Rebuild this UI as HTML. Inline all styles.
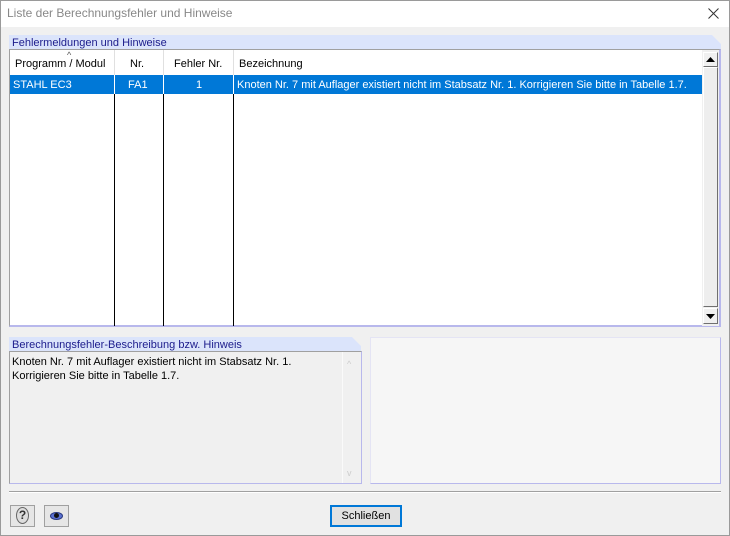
<!DOCTYPE html>
<html><head><style>
*{box-sizing:border-box;margin:0;padding:0}
body{width:730px;height:536px;background:#f0f0f0;font-family:"Liberation Sans",sans-serif;font-size:11px;position:relative;overflow:hidden;color:#000}
.a{position:absolute}
.hdr{background:#dbe4fb;color:#1c1c8c;font-size:11px;padding:2px 0 0 3px;height:15px}
.col{position:absolute;top:0;bottom:0;border-left:1px solid #000}
</style></head><body>
<div class="a" style="left:0;top:0;width:730px;height:536px;border:1px solid #9a9a9a"></div>
<div class="a" style="left:1px;top:1px;width:728px;height:26px;background:#fff"></div>
<div class="a" style="left:7px;top:6px;font-size:12px;color:#888">Liste der Berechnungsfehler und Hinweise</div>
<svg class="a" style="left:708px;top:8px" width="11" height="11"><path d="M0.5 0.5L10.5 10.5M10.5 0.5L0.5 10.5" stroke="#333" stroke-width="1"/></svg>

<div class="a hdr" style="left:9px;top:35px;width:712px;clip-path:polygon(0 0,703px 0,712px 9px,712px 15px,0 15px)">Fehlermeldungen und Hinweise</div>
<div class="a" style="left:9px;top:49px;width:712px;height:278px;background:#fff;border:1px solid #a0a0a0;border-right:2px solid #b8b8ec;border-bottom:2px solid #b8b8ec"></div>
<div class="a" style="left:10px;top:50px;width:692px;height:276px">
 <div class="col" style="left:104px;top:25px"></div>
 <div class="col" style="left:153px;top:25px"></div>
 <div class="col" style="left:223px;top:25px"></div>
 <div class="a" style="left:104px;top:0;height:25px;border-left:1px solid #e0e0e0"></div>
 <div class="a" style="left:153px;top:0;height:25px;border-left:1px solid #e0e0e0"></div>
 <div class="a" style="left:223px;top:0;height:25px;border-left:1px solid #e0e0e0"></div>
 <div class="a" style="left:5px;top:8px">Programm / Modul</div>
 <div class="a" style="left:57px;top:0px;font-size:9px;color:#555">^</div>
 <div class="a" style="left:120px;top:8px">Nr.</div>
 <div class="a" style="left:164px;top:8px">Fehler Nr.</div>
 <div class="a" style="left:229px;top:8px">Bezeichnung</div>
 <div class="a" style="left:0;top:25px;width:692px;height:19px;background:#0078d7;color:#fff">
  <div class="a" style="left:3px;top:4px">STAHL EC3</div>
  <div class="a" style="left:118px;top:4px">FA1</div>
  <div class="a" style="left:186px;top:4px">1</div>
  <div class="a" style="left:227px;top:4px">Knoten Nr. 7 mit Auflager existiert nicht im Stabsatz Nr. 1. Korrigieren Sie bitte in Tabelle 1.7.</div>
  <div class="col" style="left:104px;border-color:#fff"></div>
  <div class="col" style="left:153px;border-color:#fff"></div>
  <div class="col" style="left:223px;border-color:#fff"></div>
 </div>
</div>
<div class="a" style="left:702px;top:50px;width:17px;height:276px;background:#f0f0f0"></div>
<div class="a" style="left:703px;top:52px;width:15px;height:15px;background:#f0f0f0;border:1px solid;border-color:#fff #707070 #707070 #fff"></div>
<svg class="a" style="left:706px;top:57px" width="9" height="5"><path d="M0 5L4.5 0L9 5Z"/></svg>
<div class="a" style="left:703px;top:67px;width:15px;height:240px;background:#eee;border:1px solid;border-color:#fff #707070 #707070 #fff"></div>
<div class="a" style="left:703px;top:308px;width:15px;height:16px;background:#f0f0f0;border:1px solid;border-color:#fff #707070 #707070 #fff"></div>
<svg class="a" style="left:706px;top:314px" width="9" height="5"><path d="M0 0L4.5 5L9 0Z"/></svg>

<div class="a hdr" style="left:9px;top:337px;width:352px;clip-path:polygon(0 0,343px 0,352px 9px,352px 15px,0 15px)">Berechnungsfehler-Beschreibung bzw. Hinweis</div>
<div class="a" style="left:9px;top:351px;width:353px;height:133px;background:#f0f0f0;border:1px solid #a0a0a0;border-right:1px solid #b8b8ec;border-bottom:1px solid #b8b8ec"></div>
<div class="a" style="left:12px;top:355px;line-height:14px">Knoten Nr. 7 mit Auflager existiert nicht im Stabsatz Nr. 1.<br>Korrigieren Sie bitte in Tabelle 1.7.</div>
<div class="a" style="left:342px;top:352px;width:1px;height:131px;background:#fafafa"></div>
<div class="a" style="left:347px;top:359px;color:#ccc;font-size:9px">^</div>
<div class="a" style="left:347px;top:468px;color:#ccc;font-size:9px">v</div>
<div class="a" style="left:370px;top:337px;width:351px;height:147px;background:#f6f6f6;border:1px solid #e4e4f4;border-right:1px solid #b8b8ec;border-bottom:1px solid #b8b8ec"></div>

<div class="a" style="left:9px;top:491px;width:712px;height:2px;border-top:1px solid #a0a0a0;border-bottom:1px solid #fff"></div>
<div class="a" style="left:10px;top:505px;width:25px;height:22px;border:1px solid #a0a0a0;background:#e6e6e6"></div>
<div class="a" style="left:16px;top:507px;width:13px;height:17px;border-radius:50%;border:1px solid #666;background:#ddd;font-size:12px;text-align:center;line-height:15px;color:#333;font-weight:bold">?</div>
<div class="a" style="left:44px;top:505px;width:25px;height:22px;border:1px solid #a0a0a0;background:#e6e6e6"></div>
<div class="a" style="left:50px;top:512px;width:13px;height:8px;border-radius:50%;background:#5a70d0;border:1px solid #2a3a80"></div>
<div class="a" style="left:54px;top:513px;width:5px;height:5px;border-radius:50%;background:#111"></div>
<div class="a" style="left:330px;top:505px;width:72px;height:22px;border:2px solid #0078d7;background:#e1e1e1;text-align:center;line-height:18px;font-size:11px">Schließen</div>
</body></html>
